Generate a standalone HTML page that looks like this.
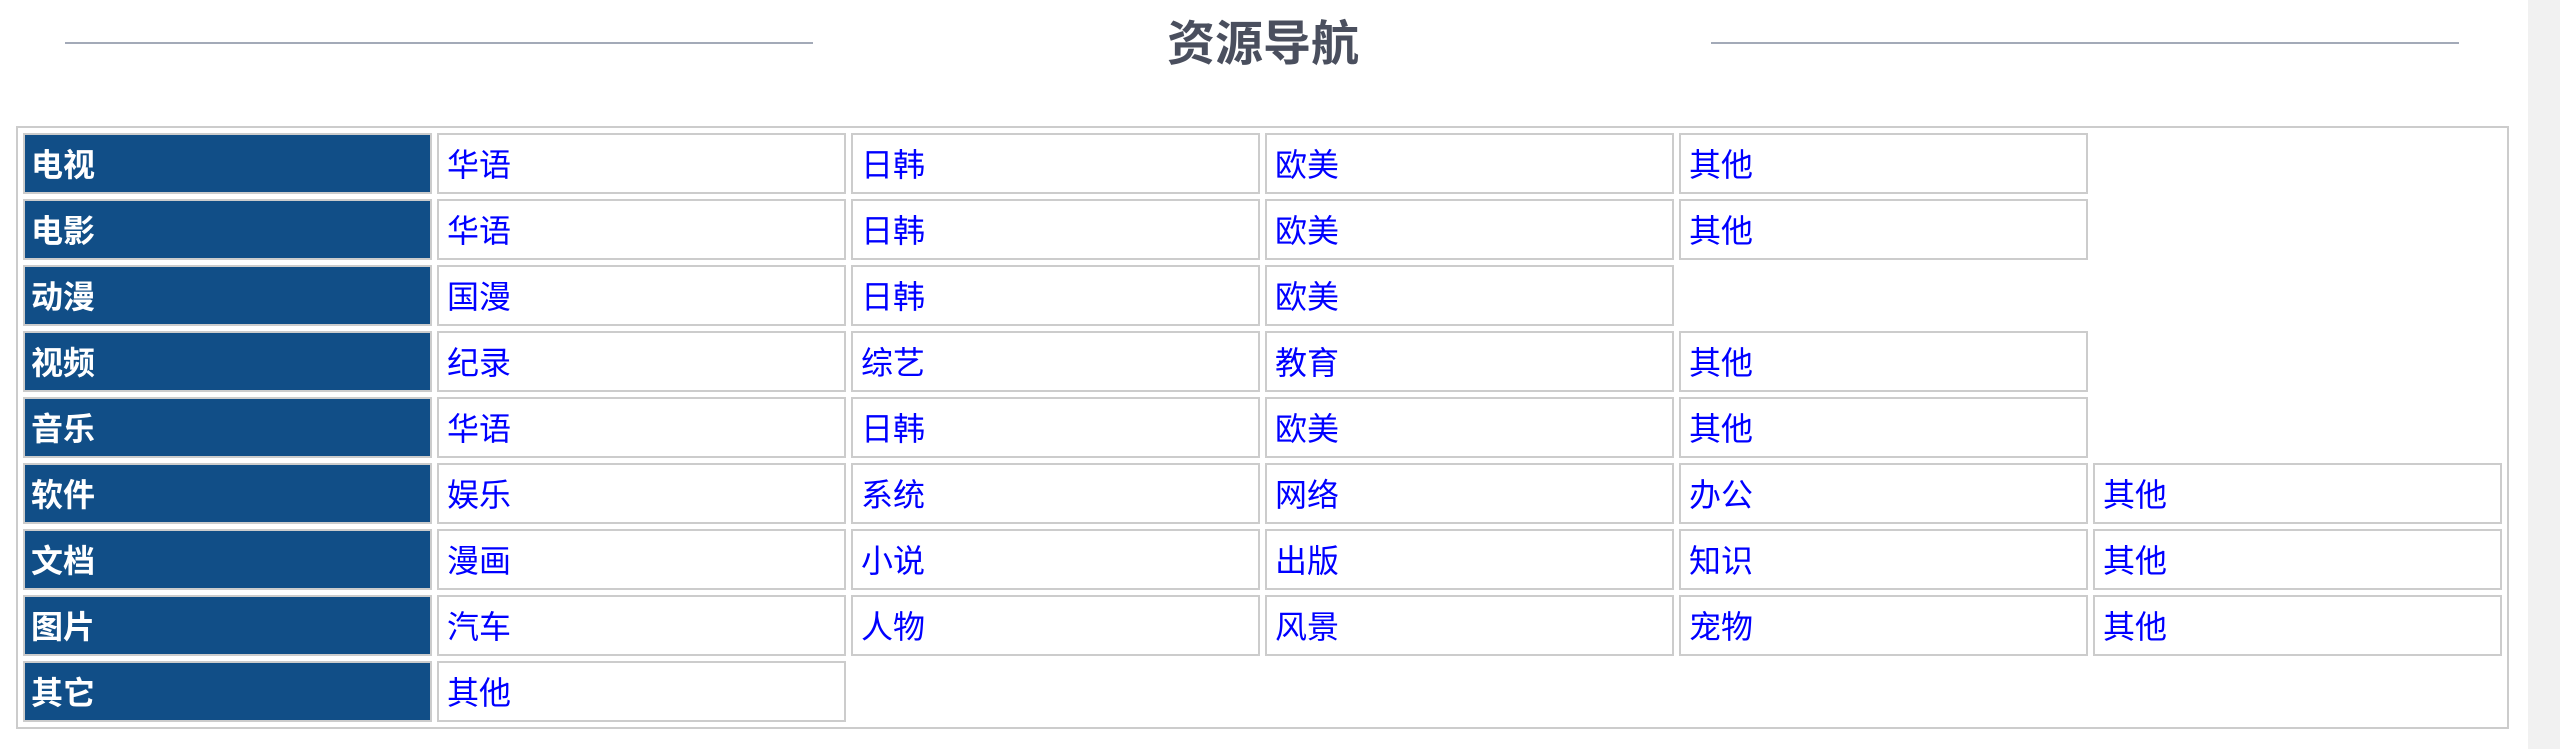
<!DOCTYPE html>
<html><head><meta charset="utf-8"><style>
html,body{margin:0;padding:0;background:#fff;}
body{width:2560px;height:749px;position:relative;overflow:hidden;font-family:"Liberation Sans","Noto Sans CJK SC",sans-serif;}
.sb{position:absolute;left:2528px;top:0;width:32px;height:749px;background:#f1f1f1;}
.ln{position:absolute;top:42px;height:2px;background:#a3aab8;}
.title{position:absolute;left:1000px;width:526px;top:16px;text-align:center;font-size:48px;font-weight:bold;color:#4a4f5e;line-height:58px;}
table{position:absolute;left:16px;top:126px;width:2493px;border:2px solid #ccc;border-spacing:5px;table-layout:fixed;}
td{box-sizing:border-box;width:409px;height:61px;border:2px solid #ccc;padding:3px 0 0 8px;font-size:32px;color:#0000ff;vertical-align:middle;line-height:40px;}
td.h{background:#114e87;color:#fff;font-weight:bold;padding-left:6px;}
td.e{border:none;}
</style></head><body>
<div class="ln" style="left:65px;width:748px"></div>
<div class="ln" style="left:1711px;width:748px"></div>
<div class="title">资源导航</div>
<table>
<tr><td class="h">电视</td><td>华语</td><td>日韩</td><td>欧美</td><td>其他</td><td class="e"></td></tr>
<tr><td class="h">电影</td><td>华语</td><td>日韩</td><td>欧美</td><td>其他</td><td class="e"></td></tr>
<tr><td class="h">动漫</td><td>国漫</td><td>日韩</td><td>欧美</td><td class="e"></td><td class="e"></td></tr>
<tr><td class="h">视频</td><td>纪录</td><td>综艺</td><td>教育</td><td>其他</td><td class="e"></td></tr>
<tr><td class="h">音乐</td><td>华语</td><td>日韩</td><td>欧美</td><td>其他</td><td class="e"></td></tr>
<tr><td class="h">软件</td><td>娱乐</td><td>系统</td><td>网络</td><td>办公</td><td>其他</td></tr>
<tr><td class="h">文档</td><td>漫画</td><td>小说</td><td>出版</td><td>知识</td><td>其他</td></tr>
<tr><td class="h">图片</td><td>汽车</td><td>人物</td><td>风景</td><td>宠物</td><td>其他</td></tr>
<tr><td class="h">其它</td><td>其他</td><td class="e"></td><td class="e"></td><td class="e"></td><td class="e"></td></tr>
</table>
<div class="sb"></div>
</body></html>
